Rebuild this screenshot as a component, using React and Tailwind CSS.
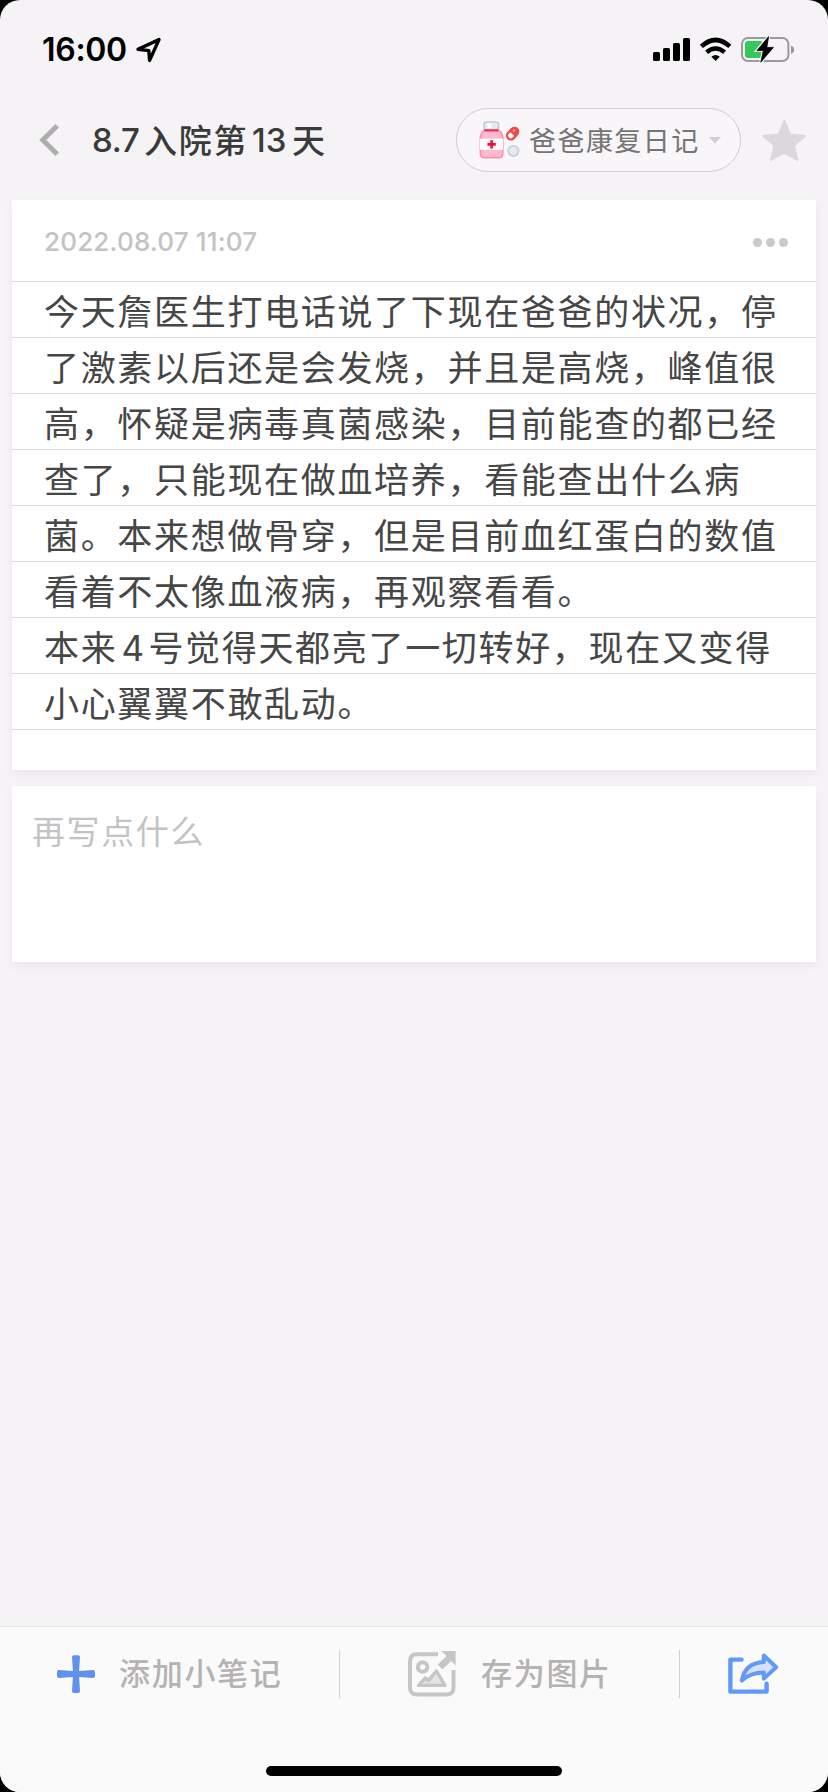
const cjk = { fontFamily: '"Noto Sans CJK SC", sans-serif' };
const inter = { fontFamily: 'Inter, "Noto Sans CJK SC", sans-serif' };

const lines = [
  "今天詹医生打电话说了下现在爸爸的状况，停",
  "了激素以后还是会发烧，并且是高烧，峰值很",
  "高，怀疑是病毒真菌感染，目前能查的都已经",
  "查了，只能现在做血培养，看能查出什么病",
  "菌。本来想做骨穿，但是目前血红蛋白的数值",
  "看着不太像血液病，再观察看看。",
  "本来4号觉得天都亮了一切转好，现在又变得",
  "小心翼翼不敢乱动。",
];

function StatusBar() {
  return (
    <div className="flex h-[100px] shrink-0 items-start justify-between pl-[42px] pr-[33px] pt-[34px]">
      <div className="flex items-start">
        <span className="w-[94px] text-[32px] font-semibold leading-[32px] tracking-[-0.3px] text-black" style={inter}>16:00</span>
        <svg width="26" height="32" viewBox="0 0 26 32" fill="none" stroke="#000" strokeWidth="3.4" strokeLinejoin="round">
          <path d="M23 5.6 13.6 26.4 12.8 16.6 2 15.2Z" />
        </svg>
      </div>
      <svg width="144" height="32" viewBox="0 0 144 32">
        <rect x="2" y="18" width="7" height="9" rx="1.6" />
        <rect x="12" y="14" width="7" height="13" rx="1.6" />
        <rect x="22" y="9" width="7" height="18" rx="1.6" />
        <rect x="32" y="4" width="7" height="23" rx="1.6" />
        <path d="M64.6 27 60.4 22.8Q64.6 19.2 68.8 22.8Z" />
        <path d="M55.6 18.2Q64.6 10.8 73.6 18.2" fill="none" stroke="#000" strokeWidth="4.4" />
        <path d="M50.4 12.4Q64.6 -0.4 78.8 12.4" fill="none" stroke="#000" strokeWidth="4.6" />
        <rect x="91" y="4" width="46.4" height="23" rx="6" fill="none" stroke="#9b999b" strokeWidth="2" />
        <path d="M140 11.5q3.2 1.4 3.2 4.2t-3.2 4.2Z" fill="#9b999b" />
        <rect x="94" y="7" width="18" height="17" rx="3" fill="#34c759" />
        <path d="M117.6 2.6 106 16.6h6.4l-2.6 11.6 12.6-14.8h-6.6Z" stroke="#f5f3f5" strokeWidth="3" />
        <path d="M117.6 2.6 106 16.6h6.4l-2.6 11.6 12.6-14.8h-6.6Z" strokeLinejoin="round" stroke="#000" strokeWidth="0.8" />
      </svg>
    </div>
  );
}

function Medicine() {
  return (
    <svg width="42" height="40" viewBox="0 0 42 40">
      <rect x="6" y="2" width="14.6" height="8" rx="2.6" fill="#e3e8f1" stroke="#c1cadb" strokeWidth="1.6" />
      <rect x="9.4" y="3.4" width="4" height="5" fill="#fff" />
      <path d="M6.4 10h14c3.4 2.6 4.4 4.6 4.4 8v15.6c0 2.6-1.4 4.2-4 4.2H6.4c-2.6 0-4-1.6-4-4.2v-15.6c0-3.4 1-5.4 4-8Z" fill="#ffb9cd" stroke="#ff8fa8" strokeWidth="1.6" />
      <path d="M6.4 10.4h14" stroke="#f0284a" strokeWidth="2" />
      <rect x="2" y="18.8" width="23" height="11" fill="#fff" />
      <path d="M13.6 20.2v8.4M9.4 24.4h8.4" stroke="#f30d36" strokeWidth="2.6" />
      <g transform="rotate(-48 34.5 13.6)">
        <rect x="27.6" y="9.4" width="14" height="8.6" rx="4.3" fill="#f24848" stroke="#e94343" strokeWidth="1.2" />
        <path d="M34 11h-2a2.6 2.6 0 0 0 0 5.4h2Z" fill="#fff" />
        <path d="M36.5 12.6h2.6" stroke="#ffb0a8" strokeWidth="1.6" />
      </g>
      <circle cx="35.4" cy="31" r="5.2" fill="#e4e9f2" stroke="#c3ccdb" strokeWidth="1.6" />
    </svg>
  );
}

function NavBar() {
  return (
    <div className="flex h-[100px] shrink-0 items-start">
      <svg className="ml-[38px] mt-[22px]" width="24" height="36" viewBox="0 0 24 36" fill="none" stroke="#adadad" strokeWidth="5">
        <path d="M19.2 3.8 4.8 18l14.4 14.2" />
      </svg>
      <h1 className="ml-[30px] mt-[16px] flex h-[48px] w-[364px] items-center whitespace-nowrap text-[33px] font-medium text-[#3a3a3a]">
        <span className="w-[52px] pt-[1px] tracking-[-0.2px]" style={inter}>8.7</span>
        <span className="tracking-[1.7px]" style={cjk}>入院第</span>
        <span className="w-[44px] pl-[4px] pt-[1px]" style={inter}>13</span>
        <span style={cjk}>天</span>
      </h1>
      <div className="mt-[8px] flex h-[64px] w-[285px] items-center rounded-full border border-[#cfcdcf] bg-[#f8f6f8] pl-[21px]">
        <Medicine />
        <span className="ml-[9px] whitespace-nowrap text-[27px] tracking-[1.45px] text-[#747474]" style={cjk}>爸爸康复日记</span>
        <svg className="ml-[9px]" width="12" height="7" viewBox="0 0 12 7"><path d="M0 0h12L6 6.5Z" fill="#cfcdcf" /></svg>
      </div>
      <svg className="ml-[20px] mt-[18px]" width="46" height="46" viewBox="0 0 46 46" fill="#dad8da" stroke="#dad8da" strokeWidth="2" strokeLinejoin="round">
        <path d="M23.3 2.5 29 16.6 44 18 32.8 27.8 36.4 42 23.3 34.6 10 42 13.6 27.8 2.4 18 17.6 16.6Z" />
      </svg>
    </div>
  );
}

function NoteLine({ text }) {
  const parts = text.split("4");
  return (
    <p className="h-[56px] overflow-hidden whitespace-nowrap border-b border-[#dadada] pl-[32px] text-[35px] leading-[56px] tracking-[1.68px] text-[#464646]" style={cjk}>
      {parts[0]}
      {parts.length > 1 && (
        <>
          <span className="inline-block w-[31px] text-center leading-none tracking-normal" style={inter}>4</span>
          {parts[1]}
        </>
      )}
    </p>
  );
}

function Footer() {
  return (
    <div className="mt-auto flex h-[166px] shrink-0 flex-col border-t border-[#e6e6e6] bg-[#fafafa]">
      <div className="flex h-[94px] items-center whitespace-nowrap text-[31px] font-medium tracking-[1.7px] text-[#b4b2b2]" style={cjk}>
        <div className="flex w-[339px] items-center pl-[56px]">
          <svg width="40" height="40" viewBox="0 0 40 40" fill="#6092ec">
            <path d="M18 1.2h4q2.2 0 2 2L23.1 16.9 36.8 16q2.2-.2 2.2 2v4q0 2.2-2.2 2L23.1 23.1 24 36.8q.2 2.2-2 2.2h-4q-2.2 0-2-2.2L16.900 23.1 3.200 24Q1 24.200 1 22v-4q0-2.200 2.200-2L16.900 16.900 16 3.200q-.2-2 2-2Z" />
          </svg>
          <span className="-mt-[4px] ml-[23px]">添加小笔记</span>
        </div>
        <i className="h-[48px] w-px bg-[#cfcfcf]" />
        <div className="flex w-[339px] items-center pl-[67px]">
          <svg width="50" height="48" viewBox="0 0 50 48" fill="none" stroke="#c6c6c6" strokeWidth="4">
            <path d="M31 4.2H10q-7 0-7 7V37.5q0 7 7 7H39.5q7 0 7-7V20" />
            <circle cx="15.6" cy="17" r="4.7" />
            <path d="M11.500 35.400 18.400 28 21.400 30.400 29.400 21 38 35.400Z" fill="#e3e3e3" strokeWidth="3.4" strokeLinejoin="round" />
            <path d="M33 17 43 7.500" strokeWidth="6.800" />
            <path d="M34.600 1H48.600V15.400Z" fill="#c6c6c6" stroke="none" />
          </svg>
          <span className="-mt-[4px] ml-[24px]">存为图片</span>
        </div>
        <i className="h-[48px] w-px bg-[#cfcfcf]" />
        <svg className="ml-[47px]" width="52" height="46" viewBox="0 0 52 46" fill="none" stroke="#6198fb" strokeWidth="4.4" strokeLinecap="round" strokeLinejoin="round">
          <path d="M14.6 8.6H3.4V40.6H39.6V32.6" />
          <path d="M36.8 4.4 49.2 16.2 36.8 27.6V21.6C27 21.6 21 24 14.8 29.6 17 17 25 11.6 36.8 11Z" fill="#d5e2fd" strokeWidth="4" />
        </svg>
      </div>
      <div className="mx-auto mt-[45px] h-[10px] w-[296px] rounded-full bg-black" />
    </div>
  );
}

export default function App() {
  return (
    <div className="h-[1792px] w-[828px] bg-black">
      <div className="flex h-full w-full flex-col overflow-hidden rounded-[20px] bg-[#f5f3f5]">
        <StatusBar />
        <NavBar />
        <div className="mx-[12px] h-[570px] shrink-0 bg-white shadow-[0_4px_10px_rgba(0,0,0,0.05)]">
          <div className="flex h-[82px] items-center justify-between border-b border-[#dadada] pl-[32px] pr-[28px]">
            <span className="pt-[2px] text-[26px] font-medium tracking-[0.18px] text-[#c3c3c3]" style={inter}>2022.08.07 11:07</span>
            <div className="flex gap-[4px] pt-[3px]">
              <i className="size-[9px] rounded-full bg-[#cacaca]" />
              <i className="size-[9px] rounded-full bg-[#cacaca]" />
              <i className="size-[9px] rounded-full bg-[#cacaca]" />
            </div>
          </div>
          {lines.map((l) => <NoteLine key={l} text={l} />)}
        </div>
        <div className="mx-[12px] mt-[16px] h-[176px] shrink-0 bg-white pl-[20px] pt-[20px] shadow-[0_4px_10px_rgba(0,0,0,0.05)]">
          <p className="text-[33px] leading-[48px] tracking-[1.6px] text-[#c3c3c3]" style={cjk}>再写点什么</p>
        </div>
        <Footer />
      </div>
    </div>
  );
}
